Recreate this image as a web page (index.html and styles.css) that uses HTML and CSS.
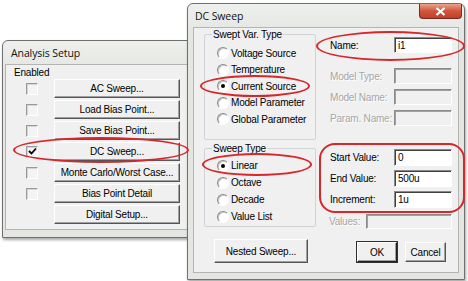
FILE: index.html
```html
<!DOCTYPE html>
<html lang="en">
<head>
    <meta charset="UTF-8">
    <title>DC Sweep</title>
    <link rel="stylesheet" href="styles.css">
</head>
<body>
    <div class="desk">

        <!-- Analysis Setup window (behind) -->
        <div class="win analysis">
            <div class="title">Analysis Setup</div>
            <div class="client">
                <div class="enabled">Enabled</div>
                <div class="row"><span class="check"></span><span class="btn wide">AC Sweep...</span></div>
                <div class="row"><span class="check"></span><span class="btn wide">Load Bias Point...</span></div>
                <div class="row"><span class="check"></span><span class="btn wide">Save Bias Point...</span></div>
                <div class="row">
                    <span class="check">
                        <svg width="9" height="9" viewBox="0 0 9 9"><polyline points="1,4 3.5,6.5 8,1.5" fill="none" stroke="#000" stroke-width="1.8"/></svg>
                    </span>
                    <span class="btn wide">DC Sweep...</span>
                </div>
                <div class="row"><span class="check"></span><span class="btn wide">Monte Carlo/Worst Case...</span></div>
                <div class="row"><span class="check"></span><span class="btn wide">Bias Point Detail</span></div>
                <div class="row"><span class="nocheck"></span><span class="btn wide">Digital Setup...</span></div>
            </div>
        </div>

        <!-- DC Sweep dialog (front) -->
        <div class="win dc">
            <div class="title">
                DC Sweep
                <span class="close">
                    <svg width="11" height="9" viewBox="0 0 11 9"><path d="M1.5 1 L9.5 8 M9.5 1 L1.5 8" stroke="#fff" stroke-width="2.2"/></svg>
                </span>
            </div>
            <div class="client">
                <div class="dc-top">
                    <div class="dc-left">
                        <div class="group swept">
                            <span class="group-title">Swept Var. Type</span>
                            <div class="opt"><span class="radio"></span>Voltage Source</div>
                            <div class="opt"><span class="radio"></span>Temperature</div>
                            <div class="opt"><span class="radio on"></span>Current Source</div>
                            <div class="opt"><span class="radio"></span>Model Parameter</div>
                            <div class="opt"><span class="radio"></span>Global Parameter</div>
                        </div>
                        <div class="group sweep-type">
                            <span class="group-title">Sweep Type</span>
                            <div class="opt"><span class="radio on"></span>Linear</div>
                            <div class="opt"><span class="radio"></span>Octave</div>
                            <div class="opt"><span class="radio"></span>Decade</div>
                            <div class="opt"><span class="radio"></span>Value List</div>
                        </div>
                    </div>

                    <div class="dc-right">
                        <div class="field"><label>Name:</label><span class="input">i1</span></div>
                        <div class="field off gap-big"><label>Model Type:</label><span class="input"></span></div>
                        <div class="field off"><label>Model Name:</label><span class="input"></span></div>
                        <div class="field off"><label>Param. Name:</label><span class="input"></span></div>
                        <div class="field tall gap-section"><label>Start Value:</label><span class="input">0</span></div>
                        <div class="field tall"><label>End Value:</label><span class="input">500u</span></div>
                        <div class="field tall"><label>Increment:</label><span class="input">1u</span></div>
                        <div class="field off values"><label>Values:</label><span class="input"></span></div>
                    </div>
                </div>

                <div class="dc-bottom">
                    <span class="btn nested">Nested Sweep...</span>
                    <span class="btn ok">OK</span>
                    <span class="btn cancel">Cancel</span>
                </div>
            </div>
        </div>

        <!-- red highlight marks drawn over the screenshot -->
        <div class="mark m-dc"></div>
        <div class="mark m-current"></div>
        <div class="mark m-linear"></div>
        <div class="mark m-name"></div>
        <div class="mark m-values"></div>
    </div>
</body>
</html>
```

FILE: styles.css
```css
* {
    box-sizing: border-box;
}

body {
    margin: 0;
    background: #fff;
    font-family: "Liberation Sans", Arial, sans-serif;
    font-size: 10px;
    letter-spacing: -0.2px;
    color: #000;
}

.desk {
    position: relative;
    width: 468px;
    height: 281px;
    background: #fff;
    overflow: hidden;
}

/* window frame */
.win {
    position: absolute;
    display: flex;
    flex-direction: column;
    border: 1px solid #707070;
    border-radius: 6px 6px 0 0;
    background: linear-gradient(#eef0ed, #e4e6e2 30px);
    box-shadow: 1px 2px 3px rgba(0, 0, 0, 0.35);
}

.title {
    display: flex;
    align-items: center;
    height: 23px;
    padding-left: 6px;
    font-family: "Open Sans", "Noto Sans", sans-serif;
    font-size: 10.5px;
    letter-spacing: -0.1px;
    color: #111;
    white-space: nowrap;
}

.client {
    flex: 1;
    background: #f0f0f0;
    border: 1px solid #b4b4b0;
    white-space: nowrap;
}

/* Analysis Setup */
.analysis {
    left: 2px;
    top: 40px;
    width: 200px;
    height: 198px;
    padding: 0 2px 7px 2px;
}

.analysis .client {
    padding: 1px 0 0 8px;
}

.enabled {
    height: 13px;
    line-height: 13px;
}

.row {
    display: flex;
    align-items: center;
    height: 19px;
    margin-bottom: 2px;
    padding-left: 12px;
}

.check, .nocheck {
    width: 12px;
    height: 12px;
    margin-right: 16px;
}

.check {
    display: flex;
    align-items: center;
    justify-content: center;
    background: #f4f4f4;
    border: 1px solid;
    border-color: #9a9a9a #fff #fff #9a9a9a;
    box-shadow: inset 1px 1px #d4d4d4;
}

/* classic push button */
.btn {
    display: flex;
    align-items: center;
    justify-content: center;
    background: #f0f0f0;
    border: 1px solid;
    border-color: #fff #555 #555 #fff;
    box-shadow: inset -1px -1px #a0a0a0;
}

.btn.wide {
    width: 126px;
    height: 19px;
}

/* DC Sweep */
.dc {
    left: 187px;
    top: 3px;
    width: 278px;
    height: 277px;
    padding: 0 5px 6px 5px;
}

.dc .title {
    padding-left: 2px;
}

.close {
    display: flex;
    align-items: center;
    justify-content: center;
    align-self: flex-start;
    width: 43px;
    height: 15px;
    margin-left: auto;
    margin-right: -3px;
    border: 1px solid #7a2a20;
    border-top: none;
    border-radius: 0 0 4px 4px;
    background: linear-gradient(#e8a48c, #d2553c 50%, #c0402a);
}

.dc .client {
    display: flex;
    flex-direction: column;
    padding: 6px 0 0 10px;
}

.dc-top {
    display: flex;
    align-items: flex-start;
}

.dc-left {
    display: flex;
    flex-direction: column;
    gap: 8px;
    width: 112px;
}

.group {
    position: relative;
    border: 1px solid #d0d4d6;
    border-radius: 2px;
    padding-left: 12px;
}

.group-title {
    position: absolute;
    top: -7px;
    left: 7px;
    padding: 0 1px;
    line-height: 13px;
    background: #f0f0f0;
}

.swept {
    height: 106px;
    padding-top: 10px;
}

.swept .opt {
    height: 16.5px;
}

.sweep-type {
    height: 79px;
    padding-top: 8px;
}

.sweep-type .opt {
    height: 17px;
}

.opt {
    display: flex;
    align-items: center;
}

.radio {
    position: relative;
    width: 12px;
    height: 12px;
    margin-right: 2px;
    border-radius: 50%;
    background: #fff;
    border: 1px solid;
    border-color: #8a8a8a #fff #fff #8a8a8a;
    box-shadow: inset 1px 1px #c8c8c8;
}

.radio.on::after {
    content: "";
    position: absolute;
    left: 3px;
    top: 3px;
    width: 4px;
    height: 4px;
    border-radius: 50%;
    background: #000;
}

.dc-right {
    display: flex;
    flex-direction: column;
    margin-left: 14px;
    margin-top: 3px;
    width: 122px;
}

.field {
    display: flex;
    align-items: center;
    height: 16px;
    margin-top: 5px;
}

.field:first-child {
    margin-top: 0;
}

.field label {
    width: 64px;
    flex-shrink: 0;
}

.field .input {
    width: 58px;
    height: 100%;
    padding: 1px 0 0 3px;
    line-height: 13px;
    background: #fff;
    border: 1px solid;
    border-color: #8a8a8a #fff #fff #8a8a8a;
    box-shadow: inset 1px 1px #404040;
}

.field.off label {
    color: #a6a6a6;
    text-shadow: 1px 1px #fff;
}

.field.off .input {
    background: #f0f0f0;
    box-shadow: inset 1px 1px #a0a0a0;
}

.gap-big {
    margin-top: 15px;
}

.gap-section {
    margin-top: 23px;
}

.field.tall {
    height: 17px;
}

.field.tall + .field.tall {
    margin-top: 4px;
}

.field.values {
    height: 15px;
    margin-top: 6px;
}

.field.values label {
    width: 37px;
    margin-left: -1px;
}

.field.values .input {
    width: 86px;
}

.dc-bottom {
    display: flex;
    align-items: flex-start;
    margin-top: 10px;
    padding-left: 10px;
}

.nested {
    width: 94px;
    height: 24px;
}

.ok, .cancel {
    height: 20px;
    margin-top: 3px;
}

.ok {
    width: 40px;
    margin-left: 49px;
    border-color: #fff #202020 #202020 #fff;
    outline: 1px solid #303030;
}

.cancel {
    width: 41px;
    margin-left: 8px;
}

/* red annotation marks over the screenshot */
.mark {
    position: absolute;
    border: 2px solid #d8262a;
    border-radius: 50%;
}

.m-dc {
    left: 13px;
    top: 137px;
    width: 176px;
    height: 26px;
}

.m-current {
    left: 200px;
    top: 75px;
    width: 110px;
    height: 22px;
}

.m-linear {
    left: 202px;
    top: 153px;
    width: 110px;
    height: 23px;
}

.m-name {
    left: 316px;
    top: 31px;
    width: 149px;
    height: 30px;
}

.m-values {
    left: 319px;
    top: 143px;
    width: 146px;
    height: 70px;
    border-radius: 16px;
}
```
